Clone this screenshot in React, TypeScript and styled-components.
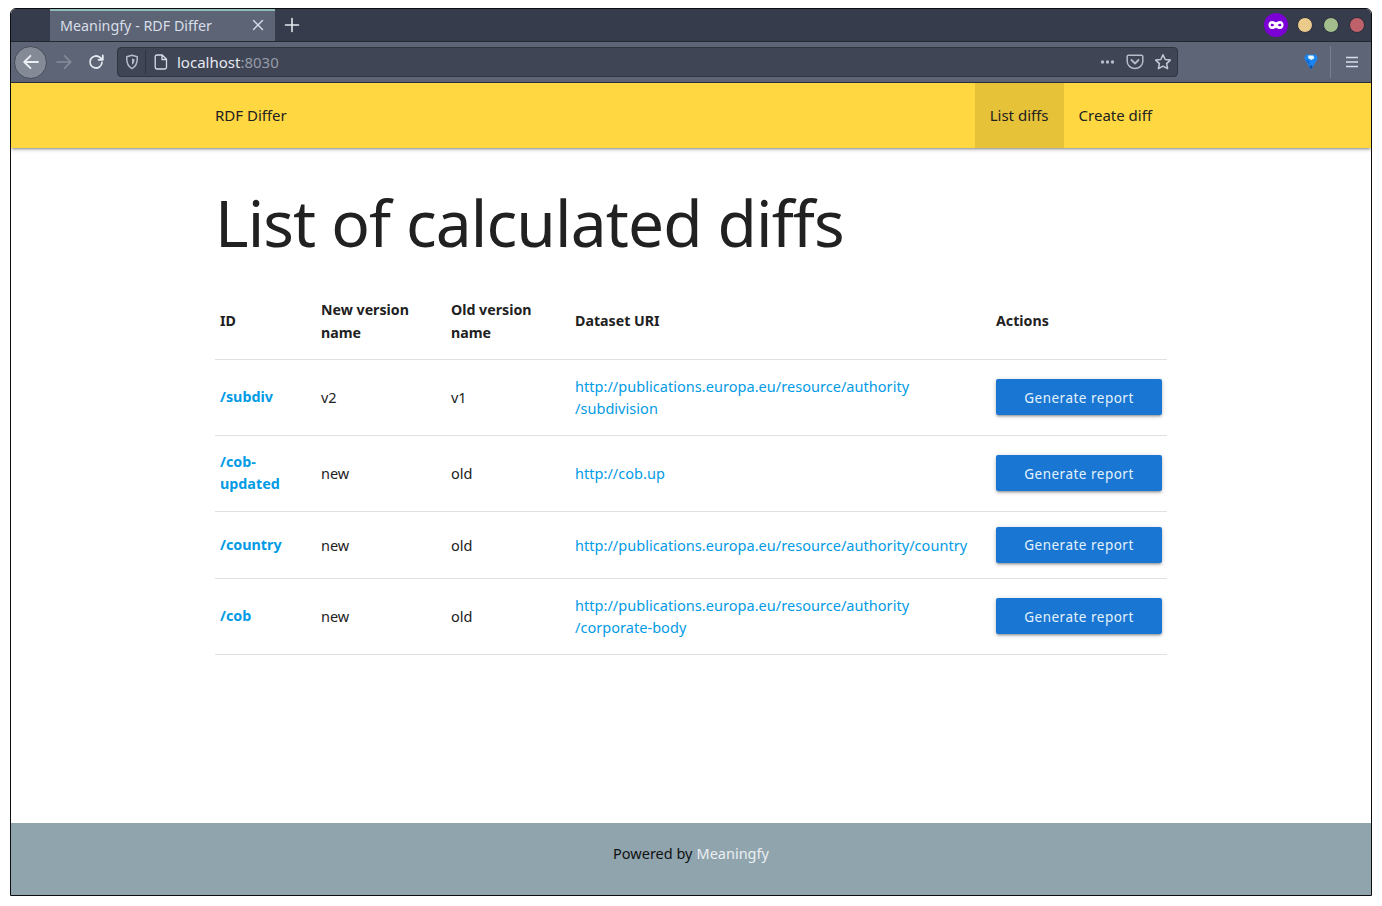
import React from "react";
import styled, { createGlobalStyle } from "styled-components";

const Global = createGlobalStyle`
  html, body { margin: 0; padding: 0; background: #fff; }
  body { font-family: "Noto Sans", "Open Sans", sans-serif; color: #212121; }
  * { box-sizing: border-box; }
`;

const Win = styled.div`
  width: 1362px; height: 888px; margin: 8px 10px 10px;
  border: 1px solid #0c0d10; border-radius: 6px 6px 0 0;
  display: flex; flex-direction: column; overflow: hidden; background: #fff;
`;
const TitleBar = styled.div`
  height: 33px; flex: none; background: #363c4b; border-bottom: 1px solid #232730;
  display: flex; align-items: stretch; padding-left: 39px;
`;
const Tab = styled.div`
  width: 225px; height: 32px; background: #5d6475; border-top: 2px solid #8fbcbb;
  display: flex; align-items: center; justify-content: space-between;
  padding: 0 11px 2px 10px; color: #d8dee9; font-size: 14.3px;
`;
const NewTab = styled.div`
  width: 34px; display: flex; align-items: center; justify-content: center; color: #e5e9f0;
`;
const Spacer = styled.div`flex: 1;`;
const WinControls = styled.div`
  display: flex; align-items: center; gap: 12px; padding-right: 6px;
`;
const Mask = styled.div`
  width: 24px; height: 24px; border-radius: 50%; background: #7a00d6;
  display: flex; align-items: center; justify-content: center; margin-right: -1px;
`;
const Dot = styled.div<{ $c: string }>`
  width: 16px; height: 16px; border-radius: 50%; background: ${p => p.$c};
  border: 1px solid #2b2f3a; margin-left: -2px; margin-right: 0;
`;
const Toolbar = styled.div`
  height: 41px; flex: none; background: #5e6576; border-bottom: 1px solid #2d313c;
  display: flex; align-items: center; padding-left: 3px;
`;
const BackBtn = styled.div`
  width: 33px; height: 33px; border-radius: 50%; background: #858b96; border: 1px solid #474c59;
  display: flex; align-items: center; justify-content: center;
`;
const ToolBtn = styled.div`
  width: 33px; height: 32px; display: flex; align-items: center; justify-content: center;
`;
const ReloadIcon = styled.svg`margin-right: 2px;`;
const UrlBar = styled.div`
  width: 1061px; height: 30px; margin-left: 4px; background: #3f4555; border: 1px solid #2f3441;
  border-radius: 4px; display: flex; align-items: center; padding-left: 7px;
`;
const UrlDivider = styled.div`width: 1px; height: 24px; background: #2f3441; margin: 0 8px 0 6px;`;
const UrlText = styled.div`
  margin-left: 9px; font-size: 15px; color: #e5e9f0; flex: 1;
  span { color: #969ca8; }
`;
const UrlRight = styled.div`display: flex; align-items: center; gap: 8px; padding-right: 5px;`;
const PocketIcon = styled.svg`margin-right: 2px;`;
const ToolRight = styled.div`
  flex: 1; display: flex; align-items: center; justify-content: flex-end; padding-right: 12px;
`;
const GemIcon = styled.svg`margin-bottom: 2px;`;
const VDivider = styled.div`width: 1px; height: 32px; background: #7a808e; margin: 0 14px 0 12px;`;

const Nav = styled.nav`
  height: 65px; flex: none; background: #ffd740; position: relative;
  box-shadow: 0 2px 2px 0 rgba(0,0,0,.14), 0 3px 1px -2px rgba(0,0,0,.12), 0 1px 5px 0 rgba(0,0,0,.2);
`;
const Container = styled.div`
  width: 952px; margin: 0 auto; height: 100%; display: flex; justify-content: space-between; align-items: stretch;
`;
const Brand = styled.div`font-size: 15px; display: flex; align-items: center; padding-bottom: 2px;`;
const NavItems = styled.div`display: flex;`;
const NavItem = styled.div<{ $active?: boolean }>`
  padding: 0 15px 2px; font-size: 15px; display: flex; align-items: center;
  background: ${p => (p.$active ? "#e6c239" : "transparent")};
`;
const Main = styled.main`flex: 1; min-height: 0;`;
const Content = styled.div`width: 952px; margin: 0 auto;`;
const Title = styled.h1`
  margin: 0; padding: 36px 0 0; height: 136px; font-size: 64px; line-height: 77px; font-weight: 400; letter-spacing: -0.86px;
  color: #212121;
`;
const Table = styled.table`
  width: 952px; border-collapse: collapse; table-layout: fixed; font-size: 14.5px; line-height: 22.5px;
`;
const Th = styled.th`
  text-align: left; font-weight: 700; padding: 15px 5px; vertical-align: middle; font-size: 14.2px;
`;
const Tr = styled.tr`border-bottom: 1px solid #e0e0e0;`;
const Td = styled.td`padding: 14.75px 5px 15.25px; vertical-align: middle;`;
const IdLink = styled.a`display: block; color: #039be5; font-weight: 700; text-decoration: none; font-size: 14.3px;`;
const Link = styled.a`color: #039be5; text-decoration: none; letter-spacing: .04px;`;
const Button = styled.button`
  display: block; width: 166px; height: 36px; border: 0; border-radius: 2px; background: #1976d2;
  color: #e3f2fd; font-family: inherit; font-size: 13.5px; letter-spacing: .5px; padding: 1px 0 0;
  box-shadow: 0 2px 2px 0 rgba(0,0,0,.14), 0 3px 1px -2px rgba(0,0,0,.12), 0 1px 5px 0 rgba(0,0,0,.2);
`;
const Footer = styled.footer`
  height: 72px; flex: none; background: #90a4ae; display: flex; align-items: center; justify-content: center;
  font-size: 14.5px; color: #111; padding-bottom: 12px;
  a { color: #eceff1; text-decoration: none; margin-left: 4px; }
`;

const rows = [
  { id: "/subdiv", a: "v2", b: "v1", uri: <>http://publications.europa.eu/resource/authority<br />/subdivision</> },
  { id: <>/cob-<br />updated</>, a: "new", b: "old", uri: "http://cob.up" },
  { id: "/country", a: "new", b: "old", uri: "http://publications.europa.eu/resource/authority/country" },
  { id: "/cob", a: "new", b: "old", uri: <>http://publications.europa.eu/resource/authority<br />/corporate-body</> },
];

const Stroke = { fill: "none", strokeLinecap: "round", strokeLinejoin: "round" } as const;

export default function App() {
  return (
    <Win>
      <Global />
      <TitleBar>
        <Tab>
          <span>Meaningfy - RDF Differ</span>
          <svg width="12" height="12" viewBox="0 0 12 12" {...Stroke} stroke="#d8dee9" strokeWidth="1.4"><path d="M1.5 1.5l9 9M10.5 1.5l-9 9" /></svg>
        </Tab>
        <NewTab>
          <svg width="16" height="16" viewBox="0 0 16 16" {...Stroke} stroke="#e5e9f0" strokeWidth="1.6"><path d="M8 1.5v13M1.5 8h13" /></svg>
        </NewTab>
        <Spacer />
        <WinControls>
          <Mask>
            <svg width="16" height="10" viewBox="0 0 18 10"><path fill="#fff" fillRule="evenodd" d="M4.5 0.5C6.5 0.5 8 1.5 9 2c1-.5 2.500-1.500 4.500-1.500C16 .5 17.500 2.500 17.500 5S16 9.500 13.500 9.500C11.500 9.500 10 8.500 9 8c-1 .5-2.500 1.500-4.500 1.500C2 9.500.5 7.500.5 5S2 .5 4.500.5zM4.500 3.500C3.500 3.500 3 4.200 3 5s.6 1.500 1.500 1.500C5.800 6.500 6.800 5.600 7 5c-.2-.6-1.200-1.500-2.500-1.500zM13.500 3.500c-1.300 0-2.300.9-2.500 1.500.2.600 1.200 1.500 2.500 1.500.9 0 1.500-.7 1.500-1.500s-.5-1.500-1.500-1.500z" /></svg>
          </Mask>
          <Dot $c="#ebcb8b" />
          <Dot $c="#a3be8c" />
          <Dot $c="#bf616a" />
        </WinControls>
      </TitleBar>
      <Toolbar>
        <BackBtn>
          <svg width="18" height="18" viewBox="0 0 18 18" {...Stroke} stroke="#eceff4" strokeWidth="1.8"><path d="M16 9H2.500M8.500 2.800L2.200 9l6.300 6.200" /></svg>
        </BackBtn>
        <ToolBtn>
          <svg width="18" height="18" viewBox="0 0 18 18" {...Stroke} stroke="#878d9a" strokeWidth="1.6"><path d="M2 9h13.500M9.500 2.800L15.800 9l-6.300 6.200" /></svg>
        </ToolBtn>
        <ToolBtn>
          <ReloadIcon width="18" height="18" viewBox="0 0 18 18" {...Stroke} stroke="#e5e9f0" strokeWidth="1.8"><path d="M15 9.500A6 6 0 1 1 13 4.500L15.500 6.500M15.800 2.500v4.300h-4.300" /></ReloadIcon>
        </ToolBtn>
        <UrlBar>
          <svg width="14" height="16" viewBox="0 0 14 16" {...Stroke} stroke="#b6bcc8" strokeWidth="1.500"><path d="M7 1.200l5.300 1.500c.2 5-.8 9.500-5.300 12-4.500-2.500-5.500-7-5.300-12L7 1.200z" /><path d="M7 4.500l2.500.7c0 2.500-.5 4.200-2.500 5.500z" fill="#b6bcc8" stroke="none" /></svg>
          <UrlDivider />
          <svg width="14" height="16" viewBox="0 0 14 16" {...Stroke} stroke="#d8dee9" strokeWidth="1.300"><path d="M2.800 1h5.400L12.500 5.300v8a1.700 1.700 0 0 1-1.700 1.700H2.800A1.700 1.700 0 0 1 1.200 13.300V2.700A1.700 1.700 0 0 1 2.800 1zM8 1.200v4.300h4.300" /></svg>
          <UrlText>localhost<span>:8030</span></UrlText>
          <UrlRight>
            <svg width="20" height="16" viewBox="0 0 20 16" fill="#b6bcc8"><circle cx="4.500" cy="8" r="1.700" /><circle cx="9.500" cy="8" r="1.700" /><circle cx="14.500" cy="8" r="1.700" /></svg>
            <PocketIcon width="18" height="16" viewBox="0 0 18 16" {...Stroke} stroke="#b6bcc8" strokeWidth="1.500"><path d="M2.500 1.200h13A1.300 1.300 0 0 1 16.800 2.500v5c0 3.800-3.500 7-7.800 7s-7.800-3.200-7.800-7v-5A1.300 1.300 0 0 1 2.500 1.200z" /><path d="M5.500 6L9 9.500 12.500 6" strokeWidth="1.800" /></PocketIcon>
            <svg width="18" height="18" viewBox="0 0 18 18" {...Stroke} stroke="#c4cad5" strokeWidth="1.500"><path d="M9 1.800l2.200 4.700 5.100.6-3.700 3.500 1 5.100L9 13.200l-4.600 2.500 1-5.100L1.700 7.100l5.100-.6z" /></svg>
          </UrlRight>
        </UrlBar>
        <ToolRight>
          <GemIcon width="14" height="15" viewBox="0 0 14 15">
            <path fill="#1b84ee" d="M3.500.5h7C12.500.5 13.500 2 13.500 4c0 1.500-.8 2.800-2 4.200L8 14.500H6L2.500 8.200C1.300 6.800.5 5.500.5 4 .5 2 1.500.5 3.500.5z" />
            <path fill="#e9fbff" d="M4.500 1.500h4.500l1.500 2.500-3 2-3.500-2z" />
            <path fill="#0a4fa8" d="M6 14.500h2l.5-3h-3z" />
            <path fill="#0e62c4" d="M1.500 5.500l4 5.500-.5-4z" />
          </GemIcon>
          <VDivider />
          <svg width="14" height="12" viewBox="0 0 14 12" stroke="#d8dee9" strokeWidth="1.500"><path d="M1 1.500h12M1 6h12M1 10.500h12" /></svg>
        </ToolRight>
      </Toolbar>
      <Nav>
        <Container>
          <Brand>RDF Differ</Brand>
          <NavItems>
            <NavItem $active>List diffs</NavItem>
            <NavItem>Create diff</NavItem>
          </NavItems>
        </Container>
      </Nav>
      <Main>
        <Content>
          <Title>List of calculated diffs</Title>
          <Table>
            <colgroup>
              <col style={{ width: 101 }} />
              <col style={{ width: 130 }} />
              <col style={{ width: 124 }} />
              <col style={{ width: 421 }} />
              <col style={{ width: 176 }} />
            </colgroup>
            <thead>
              <Tr>
                <Th>ID</Th>
                <Th>New version<br />name</Th>
                <Th>Old version<br />name</Th>
                <Th>Dataset URI</Th>
                <Th>Actions</Th>
              </Tr>
            </thead>
            <tbody>
              {rows.map((r, i) => (
                <Tr key={i}>
                  <Td><IdLink href="#">{r.id}</IdLink></Td>
                  <Td>{r.a}</Td>
                  <Td>{r.b}</Td>
                  <Td><Link href="#">{r.uri}</Link></Td>
                  <Td><Button>Generate report</Button></Td>
                </Tr>
              ))}
            </tbody>
          </Table>
        </Content>
      </Main>
      <Footer>Powered by<a href="#">Meaningfy</a></Footer>
    </Win>
  );
}
